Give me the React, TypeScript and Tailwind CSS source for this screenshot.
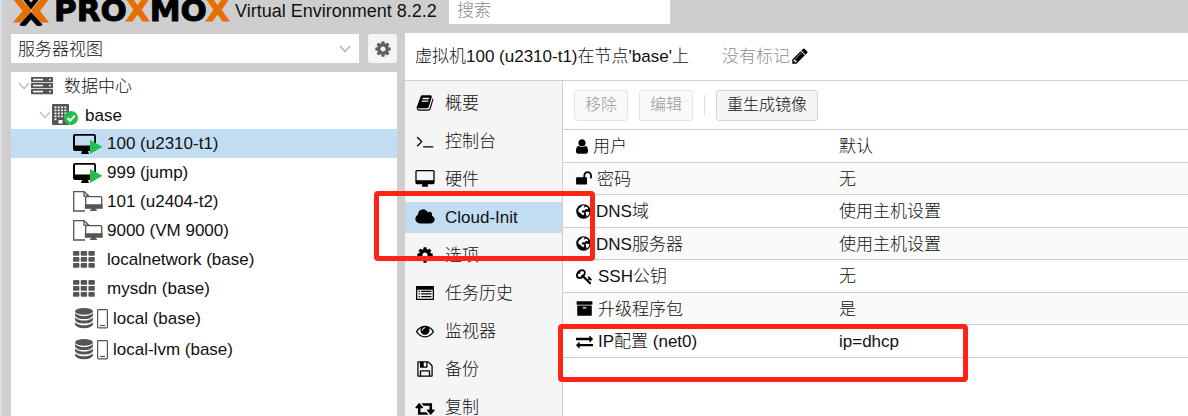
import React from "react";

const PATHS = {
  book: "M1703 478q40 57 18 129l-275 906q-19 64-76.5 107.5t-122.5 43.5h-923q-77 0-148.5-53.5t-99.5-131.5q-24-67-2-127 0-4 3-27t4-37q1-8-3-21.5t-3-19.5q2-11 8-21t16.5-23.5 16.5-23.5q23-38 45-91.5t30-91.5q3-10 .5-30t-.5-28q3-11 17-28t17-23q21-36 42-92t25-90q1-9-2.5-32t.5-28q4-13 22-30.5t22-22.5q19-26 42.5-84.5t27.5-96.5q1-8-3-25.5t-2-26.5q2-8 9-18t18-23 17-21q8-12 16.5-30.5t15-35 16-36 19.5-32 26.5-23.5 36-11.5 47.5 5.5l-1 3q38-9 51-9h761q74 0 114 56t18 130l-274 906q-36 119-71.5 153.5t-128.5 34.5h-869q-27 0-38 15-11 16-1 43 24 70 144 70h923q29 0 56-15.5t35-41.5l300-987q7-22 5-57 38 15 59 43zm-1064 2q-4 13 2 22.5t20 9.5h608q13 0 25.5-9.5t16.5-22.5l21-64q4-13-2-22.5t-20-9.5h-608q-13 0-25.5 9.5t-16.5 22.5zm-83 256q-4 13 2 22.5t20 9.5h608q13 0 25.5-9.5t16.5-22.5l21-64q4-13-2-22.5t-20-9.5h-608q-13 0-25.5 9.5t-16.5 22.5z",
  terminal: "M649 983l-466 466q-10 10-23 10t-23-10l-50-50q-10-10-10-23t10-23l393-393-393-393q-10-10-10-23t10-23l50-50q10-10 23-10t23 10l466 466q10 10 10 23t-10 23zm1079 457v64q0 14-9 23t-23 9h-960q-14 0-23-9t-9-23v-64q0-14 9-23t23-9h960q14 0 23 9t9 23z",
  desktop: "M1728 992v-832q0-13-9.5-22.5t-22.5-9.5h-1600q-13 0-22.5 9.5t-9.5 22.5v832q0 13 9.5 22.5t22.5 9.5h1600q13 0 22.5-9.5t9.5-22.5zm128-832v1088q0 66-47 113t-113 47h-544q0 37 16 77.5t32 71 16 43.5q0 26-19 45t-45 19h-512q-26 0-45-19t-19-45q0-14 16-44t32-70 16-78h-544q-66 0-113-47t-47-113v-1088q0-66 47-113t113-47h1600q66 0 113 47t47 113z",
  cloud: "M1984 1152q0 159-112.5 271.5t-271.5 112.5h-1088q-185 0-316.5-131.5t-131.5-316.5q0-132 71-241.5t187-163.5q-2-28-2-43 0-212 150-362t362-150q158 0 286.5 88t187.5 230q70-62 166-62 106 0 181 75t75 181q0 75-41 138 129 30 213 134.5t84 239.5z",
  cog: "M1152 896q0-106-75-181t-181-75-181 75-75 181 75 181 181 75 181-75 75-181zm512-109v222q0 12-8 23t-20 13l-185 28q-19 54-39 91 35 50 107 138 10 12 10 25t-9 23q-27 37-99 108t-94 71q-12 0-26-9l-138-108q-44 23-91 38-16 136-29 186-7 28-36 28h-222q-14 0-24.5-8.5t-11.5-21.5l-28-184q-49-16-90-37l-141 107q-10 9-25 9-14 0-25-11-126-114-165-168-7-10-7-23 0-12 8-23 15-21 51-66.5t54-70.5q-27-50-41-99l-183-27q-13-2-21-12.5t-8-23.5v-222q0-12 8-23t19-13l186-28q14-46 39-92-40-57-107-138-10-12-10-24 0-10 9-23 26-36 98.5-107.5t94.5-71.5q13 0 26 10l138 107q44-23 91-38 16-136 29-186 7-28 36-28h222q14 0 24.5 8.5t11.5 21.5l28 184q49 16 90 37l142-107q9-9 24-9 13 0 25 10 129 119 165 170 7 8 7 22 0 12-8 23-15 21-51 66.5t-54 70.5q26 50 41 98l183 28q13 2 21 12.5t8 23.5z",
  list: "M64 192h1664q64 0 64 64v1280q0 64-64 64h-1664q-64 0-64-64v-1280q0-64 64-64zm64 384v896h1536v-896zm128 96h128v128h-128zm256 0h1024v128h-1024zm-256 256h128v128h-128zm256 0h1024v128h-1024zm-256 256h128v128h-128zm256 0h1024v128h-1024z",
  eye: "M1664 960q-152-236-381-353 61 104 61 225 0 185-131.5 316.5t-316.5 131.5-316.5-131.5-131.5-316.5q0-121 61-225-229 117-381 353 133 205 333.5 326.5t434.5 121.5 434.5-121.5 333.5-326.5zm-720-384q0-20-14-34t-34-14q-125 0-214.5 89.5t-89.5 214.5q0 20 14 34t34 14 34-14 14-34q0-86 61-147t147-61q20 0 34-14t14-34zm848 384q0 34-20 69-140 230-376.5 368.5t-499.5 138.5-499.5-139-376.5-368q-20-35-20-69t20-69q140-229 376.5-368t499.5-139 499.5 139 376.5 368q20 35 20 69z",
  floppy: "M512 1536h768v-384h-768v384zm896 0h128v-896q0-14-10-38.5t-20-34.5l-281-281q-10-10-34-20t-39-10v416q0 40-28 68t-68 28h-576q-40 0-68-28t-28-68v-416h-128v1280h128v-416q0-40 28-68t68-28h832q40 0 68 28t28 68v416zm-384-928v-320q0-13-9.5-22.5t-22.5-9.5h-192q-13 0-22.5 9.5t-9.5 22.5v320q0 13 9.5 22.5t22.5 9.5h192q13 0 22.5-9.5t9.5-22.5zm640 32v928q0 40-28 68t-68 28h-1344q-40 0-68-28t-28-68v-1344q0-40 28-68t68-28h928q40 0 88 20t76 48l280 280q28 28 48 76t20 88z",
  retweet: "M1280 1632q0 13-9.5 22.5t-22.5 9.5h-960q-8 0-13.5-2t-9-7-5.5-8-3-11.5-1-11.5v-600h-192q-26 0-45-19t-19-45q0-24 15-41l320-384q19-22 49-22t49 22l320 384q15 17 15 41 0 26-19 45t-45 19h-192v384h576q16 0 25 11l160 192q7 10 7 21zm640-416q0 24-15 41l-320 384q-20 23-49 23t-49-23l-320-384q-15-17-15-41 0-26 19-45t45-19h192v-384h-576q-16 0-25-12l-160-192q-7-9-7-20 0-13 9.5-22.5t22.5-9.5h960q8 0 13.5 2t9 7 5.5 8 3 11.5 1 11.5v600h192q26 0 45 19t19 45z",
  user: "M1536 1399q0 109-62.5 187t-150.5 78h-854q-88 0-150.5-78t-62.5-187q0-85 8.5-160.5t31.5-152 58.5-131 94-89 134.5-34.5q131 128 313 128t313-128q76 0 134.5 34.5t94 89 58.5 131 31.5 152 8.5 160.5zm-256-887q0 159-112.5 271.5t-271.5 112.5-271.5-112.5-112.5-271.5 112.5-271.5 271.5-112.5 271.5 112.5 112.5 271.5z",
  unlock: "M1728 576v256q0 26-19 45t-45 19h-64q-26 0-45-19t-19-45v-256q0-106-75-181t-181-75-181 75-75 181v192h96q40 0 68 28t28 68v576q0 40-28 68t-68 28h-960q-40 0-68-28t-28-68v-576q0-40 28-68t68-28h672v-192q0-185 131.5-316.5t316.5-131.5 316.5 131.5 131.5 316.5z",
  key: "M832 512q0-80-56-136t-136-56-136 56-56 136q0 42 19 83-41-19-83-19-80 0-136 56t-56 136 56 136 136 56 136-56 56-136q0-42-19-83 41 19 83 19 80 0 136-56t56-136zm851 704q0 17-49 66t-66 49q-9 0-28.5-16t-36.5-33-38.5-40-24.5-26l-96 96 220 220q28 28 28 68 0 42-39 81t-81 39q-40 0-68-28l-671-671q-176 131-365 131-163 0-265.5-102.5t-102.5-265.5q0-160 95-313t248-248 313-95q163 0 265.5 102.5t102.5 265.5q0 189-131 365l355 355 96-96q-3-3-26-24.5t-40-38.5-33-36.5-16-28.5q0-17 49-66t66-49q13 0 23 10 6 6 46 44.5t82 79.5 86.5 86 73 78 28.5 41z",
  archive: "M1088 832q0-26-19-45t-45-19h-256q-26 0-45 19t-19 45 19 45 45 19h256q26 0 45-19t19-45zm576-192v960q0 26-19 45t-45 19h-1408q-26 0-45-19t-19-45v-960q0-26 19-45t45-19h1408q26 0 45 19t19 45zm64-448v256q0 26-19 45t-45 19h-1536q-26 0-45-19t-19-45v-256q0-26 19-45t45-19h1536q26 0 45 19t19 45z",
  exchange: "M1792 1184v192q0 13-9.5 22.5t-22.5 9.5h-1376v192q0 13-9.5 22.5t-22.5 9.5q-12 0-24-10l-319-320q-9-9-9-22 0-14 9-23l320-320q9-9 23-9 13 0 22.5 9.5t9.5 22.5v192h1376q13 0 22.5 9.5t9.5 22.5zm0-544q0 14-9 23l-320 320q-9 9-23 9-13 0-22.5-9.5t-9.5-22.5v-192h-1376q-13 0-22.5-9.5t-9.5-22.5v-192q0-13 9.5-22.5t22.5-9.5h1376v-192q0-14 9-23t23-9q12 0 24 10l319 319q9 9 9 23z",
  pencil: "M491 1536l91-91-235-235-91 91v107h128v128h107zm523-928q0-22-22-22-10 0-17 7l-542 542q-7 7-7 17 0 22 22 22 10 0 17-7l542-542q7-7 7-17zm-54-192l416 416-832 832h-416v-416zm683 96q0 53-37 90l-166 166-416-416 166-165q36-38 90-38 53 0 91 38l235 234q37 39 37 91z",
  globe: "M896 128a768 768 0 1 0 0 1536a768 768 0 1 0 0-1536zM760 270l210-20 40 90-90 90 130 40 110-90 130 40 100 150-60 90-130-30-120 60-60 110-110-30-130 20-70 110 50 90 110-20 80 90 20 160-90 60-150-60-110-130-160-90-120-150 30-180 100-130 140-90zM1130 950l150-60 180 60 60 100-80 190-150 160-110 40 40-180-100-120z",
};

type IconName = keyof typeof PATHS;

function Icon({ name, box, className }: { name: IconName; box: string; className: string }) {
  return (
    <svg viewBox={box} className={`shrink-0 ${className}`} fill="currentColor" fillRule="evenodd" aria-hidden="true">
      <path d={PATHS[name]} />
    </svg>
  );
}

function Chevron({ className }: { className: string }) {
  return (
    <svg viewBox="0 0 12 8" className={`shrink-0 ${className}`} fill="none" stroke="currentColor" strokeWidth="1.6" aria-hidden="true">
      <path d="M1 1l5 5.5L11 1" />
    </svg>
  );
}

function LogoMark() {
  return (
    <svg viewBox="0 0 38 27" className="h-[27px] w-[38px] shrink-0" aria-hidden="true">
      <path d="M1 -1h6q2 0 3.500 1.500L18 8.500q2 2.300 0 4.500L10.500 21q-1.500 1.600-3.500 1.600H1L10.500 11z" fill="#e57000" />
      <path d="M37 -1h-6q-2 0-3.500 1.500L20.500 8.500q-2 2.300 0 4.500L27.500 21q1.500 1.600 3.500 1.600H37L28 11z" fill="#e57000" />
      <path d="M10.500 -1h17L19 9.500z" fill="#000" />
      <path d="M16 -1h6L19 2.500z" fill="#cecece" />
      <path d="M19 12l11.500 12.500q-1 1.500-3 1.500h-2.500L19 19.500 13.500 26H10.500q-2 0-3-1.500z" fill="#000" />
    </svg>
  );
}

function ServerIcon() {
  return (
    <svg viewBox="0 0 22 18" className="h-[18px] w-[22px] shrink-0" aria-hidden="true">
      {[0, 6, 12].map((y) => (
        <g key={y}>
          <rect x="0" y={y} width="22" height="5.200" rx="0.600" fill="#555" />
          <rect x="2" y={y + 1.8} width="10" height="1.500" fill="#fff" />
          <rect x="18" y={y + 1.8} width="1.800" height="1.500" fill="#fff" />
        </g>
      ))}
    </svg>
  );
}

function NodeIcon() {
  return (
    <svg viewBox="0 0 26 22" className="h-[22px] w-[26px] shrink-0" aria-hidden="true">
      <rect x="0" y="0" width="17" height="21" rx="0.800" fill="#555" />
      {[2.5, 5.5, 8.5, 11.500].map((y) =>
        [2.5, 5.8, 9.1, 12.4].map((x) => <rect key={`${x}-${y}`} x={x} y={y} width="1.900" height="1.700" fill="#fff" />),
      )}
      <rect x="2.500" y="14.500" width="1.900" height="1.700" fill="#fff" />
      <rect x="6.500" y="16" width="4" height="3.500" fill="#fff" />
      <circle cx="19" cy="14" r="7" fill="#21bf4b" />
      <path d="M15.500 14l2.500 2.700 4.700-5" fill="none" stroke="#fff" strokeWidth="2" />
    </svg>
  );
}

function RunningIcon() {
  return (
    <svg viewBox="0 0 30 20" className="h-5 w-[30px] shrink-0" aria-hidden="true">
      <path d="M2 0h19q2 0 2 2v13q0 2-2 2h-6l1 3h-8l1-3h-7q-2 0-2-2v-13q0-2 2-2zm0 1.800v9.700h19.200v-9.700z" fill="#000" fillRule="evenodd" />
      <path d="M17 6l12.500 6.800-12.500 7.200z" fill="#21bf4b" />
    </svg>
  );
}

function TemplateIcon() {
  return (
    <svg viewBox="0 0 30 21" className="h-[21px] w-[30px] shrink-0" fill="none" stroke="#555" strokeWidth="1.300" aria-hidden="true">
      <path d="M12 20H.7V.7H11l5 4.500M11 .7v4.500h5" />
      <rect x="12.700" y="5.700" width="16" height="10.800" rx="1" fill="#fff" />
      <path d="M12.500 14h16.500v3h-16.500zM17 19.300h7M19 17h3v2h-3z" fill="#555" />
    </svg>
  );
}

function GridIcon() {
  return (
    <svg viewBox="0 0 30 17" className="h-[17px] w-[30px] shrink-0" fill="#555" aria-hidden="true">
      {[0, 6, 12].map((y) => [0, 7.7, 15.400].map((x) => <rect key={`${x}-${y}`} x={x} y={y} width="6.400" height="4.800" rx="1" />))}
    </svg>
  );
}

function StorageIcon() {
  return (
    <svg viewBox="0 0 36 21" className="h-[21px] w-9 shrink-0" aria-hidden="true">
      <ellipse cx="11" cy="3.400" rx="9" ry="3.400" fill="#555" />
      {[5.2, 9.8, 14.400].map((y) => (
        <path key={y} d={`M2 ${y}q3.500 2.800 9 2.800t9-2.800v2.200q-1.500 3.600-9 3.600t-9-3.600z`} fill="#555" />
      ))}
      <rect x="24.600" y="1.600" width="9.800" height="18.200" rx="0.800" fill="#fff" stroke="#555" strokeWidth="1.200" />
      <path d="M27 17.500h5" stroke="#555" strokeWidth="1.200" />
    </svg>
  );
}

const GUESTS = [
  { label: "100 (u2310-t1)", icon: <RunningIcon />, selected: true },
  { label: "999 (jump)", icon: <RunningIcon /> },
  { label: "101 (u2404-t2)", icon: <TemplateIcon /> },
  { label: "9000 (VM 9000)", icon: <TemplateIcon /> },
  { label: "localnetwork (base)", icon: <GridIcon /> },
  { label: "mysdn (base)", icon: <GridIcon /> },
];

const STORAGES = ["local (base)", "local-lvm (base)"];

const NAV: { label: string; icon: IconName; box: string; size: string; active?: boolean }[] = [
  { label: "概要", icon: "book", box: "0 0 1792 1792", size: "size-[18px]" },
  { label: "控制台", icon: "terminal", box: "0 0 1792 1792", size: "size-[18px]" },
  { label: "硬件", icon: "desktop", box: "-64 0 1920 1792", size: "h-[18px] w-5" },
  { label: "Cloud-Init", icon: "cloud", box: "64 0 1920 1792", size: "h-[18px] w-5", active: true },
  { label: "选项", icon: "cog", box: "0 0 1792 1792", size: "size-[18px]" },
  { label: "任务历史", icon: "list", box: "0 0 1792 1792", size: "size-[18px]" },
  { label: "监视器", icon: "eye", box: "0 0 1792 1792", size: "size-[18px]" },
  { label: "备份", icon: "floppy", box: "0 0 1792 1792", size: "size-[18px]" },
  { label: "复制", icon: "retweet", box: "0 0 1920 1792", size: "h-[18px] w-5" },
];

const SETTINGS: { label: string; value: string; icon: IconName; box: string; size: string }[] = [
  { label: "用户", value: "默认", icon: "user", box: "256 0 1280 1792", size: "h-[17px] w-3" },
  { label: "密码", value: "无", icon: "unlock", box: "64 0 1664 1792", size: "h-[17px] w-4" },
  { label: "DNS域", value: "使用主机设置", icon: "globe", box: "128 0 1536 1792", size: "h-[17px] w-[15px]" },
  { label: "DNS服务器", value: "使用主机设置", icon: "globe", box: "128 0 1536 1792", size: "h-[17px] w-[15px]" },
  { label: "SSH公钥", value: "无", icon: "key", box: "0 0 1792 1792", size: "size-[17px]" },
  { label: "升级程序包", value: "是", icon: "archive", box: "0 0 1792 1792", size: "size-[17px]" },
  { label: "IP配置 (net0)", value: "ip=dhcp", icon: "exchange", box: "0 0 1792 1792", size: "size-[17px]" },
];

function TopBar() {
  return (
    <header className="flex h-[33px] items-start pl-3">
      <LogoMark />
      <span className="ml-1 w-[181px] whitespace-nowrap font-['DejaVu_Sans',sans-serif] text-[31px] leading-5 font-bold text-black [-webkit-text-stroke:1px_currentColor]">
        PRO<span className="text-[#e57000]">X</span>MO<span className="text-[#e57000]">X</span>
      </span>
      <span className="w-[214px] whitespace-nowrap text-[18px] leading-[22px]">Virtual Environment 8.2.2</span>
      <input
        type="text"
        aria-label="搜索"
        placeholder="搜索"
        className="h-6 w-[221px] bg-white px-2 pb-0.5 outline-none placeholder:text-[#8a8a8a]"
      />
    </header>
  );
}

function ResourceTree() {
  return (
    <aside className="flex w-[386px] shrink-0 flex-col">
      <div className="flex gap-[9px] pt-px">
        <div className="grid w-[348px] items-center bg-white">
          <select
            aria-label="视图"
            className="col-start-1 row-start-1 h-[29px] w-full appearance-none bg-transparent pt-0.5 pl-[7px] outline-none"
          >
            <option>服务器视图</option>
          </select>
          <Chevron className="pointer-events-none col-start-1 row-start-1 mr-2 h-2 w-3 justify-self-end text-[#b8b8b8]" />
        </div>
        <button type="button" aria-label="设置" className="flex h-[29px] w-[29px] items-center justify-center rounded-[3px] bg-[#f5f5f5] text-[#606060]">
          <Icon name="cog" box="0 0 1792 1792" className="size-[18px]" />
        </button>
      </div>
      <ul className="mt-[9px] flex-1 bg-white">
        <li>
          <div className="flex h-7 items-center pl-[7px]">
            <Chevron className="h-2 w-3 text-[#c4c4c4]" />
            <span className="mr-[11px] ml-px flex"><ServerIcon /></span>
            <span className="pt-0.5">数据中心</span>
          </div>
          <ul>
            <li>
              <div className="flex h-[29px] items-center pl-7">
                <Chevron className="h-2 w-3 text-[#c4c4c4]" />
                <span className="mr-[7px] ml-px flex"><NodeIcon /></span>
                <span className="pt-0.5">base</span>
              </div>
              <ul>
                {GUESTS.map((g) => (
                  <li key={g.label} className={`flex h-[29px] items-center gap-1 pl-[62px] ${g.selected ? "bg-[#c2ddf2]" : ""}`}>
                    {g.icon}
                    {g.label}
                  </li>
                ))}
                {STORAGES.map((s) => (
                  <li key={s} className="flex h-[31px] items-center gap-1 pl-[62px]">
                    <StorageIcon />
                    {s}
                  </li>
                ))}
              </ul>
            </li>
          </ul>
        </li>
      </ul>
    </aside>
  );
}

function SideNav() {
  return (
    <nav className="flex w-[158px] shrink-0 flex-col gap-[7px] overflow-hidden border-r border-[#cfcfcf] bg-[#f5f5f5] pt-[7px]">
      {NAV.map((n) => (
        <a
          key={n.label}
          href="#"
          className={`flex h-[31px] shrink-0 items-center gap-[10px] pl-[10px] ${n.active ? "bg-[#c2ddf2]" : ""}`}
        >
          <span className="flex w-5 justify-center pb-0.5 text-black">
            <Icon name={n.icon} box={n.box} className={n.size} />
          </span>
          {n.label}
        </a>
      ))}
    </nav>
  );
}

function CloudInitPanel() {
  return (
    <section className="min-w-0 flex-1">
      <div className="flex h-12 items-center gap-[11px] pl-[11px] text-[16px]">
        <button type="button" disabled className="h-[31px] rounded-[3px] border border-[#e4e4e4] bg-[#fafafa] px-[10px] text-[#999]">
          移除
        </button>
        <button type="button" disabled className="h-[31px] rounded-[3px] border border-[#e4e4e4] bg-[#fafafa] px-[10px] text-[#999]">
          编辑
        </button>
        <span className="h-5 w-px bg-[#dcdcdc]" />
        <button type="button" className="h-[31px] rounded-[3px] border border-[#d4d4d4] bg-[#f5f5f5] px-[10px]">
          重生成镜像
        </button>
      </div>
      <table className="w-full table-fixed border-separate border-spacing-0 border-t border-[#cfcfcf]">
        <tbody>
          {SETTINGS.map((s) => (
            <tr key={s.label} className="h-[33px] even:h-8 even:bg-[#fafafa]">
              <th scope="row" className="w-[276px] border-b border-[#cfcfcf] p-0 pt-0.5 pl-[13px] text-left font-light">
                <span className="flex items-center gap-[5px] leading-6">
                  <Icon name={s.icon} box={s.box} className={`mb-0.5 text-black ${s.size}`} />
                  {s.label}
                </span>
              </th>
              <td className="border-b border-[#cfcfcf] p-0 pt-0.5 leading-6">{s.value}</td>
            </tr>
          ))}
        </tbody>
      </table>
    </section>
  );
}

export default function App() {
  return (
    <div className="relative flex h-screen flex-col overflow-hidden border-l-2 border-[#dcdce4] bg-[#cecece] font-['Liberation_Sans','Noto_Sans_CJK_SC',sans-serif] text-[17px] font-light text-[#111]">
      <div className="-ml-0.5 flex min-h-0 flex-1 flex-col">
        <TopBar />
        <div className="flex min-h-0 flex-1 gap-2 pl-[11px]">
          <ResourceTree />
          <main className="flex min-w-0 flex-1 flex-col bg-white">
            <div className="flex h-12 shrink-0 items-center border-b border-[#cfcfcf] pl-[10px]">
              <h1 className="mr-[33px] whitespace-nowrap">虚拟机100 (u2310-t1)在节点'base'上</h1>
              <span className="text-[#8f8f8f]">没有标记</span>
              <button type="button" aria-label="编辑标记" className="ml-px pb-0.5 text-black">
                <Icon name="pencil" box="0 0 1792 1792" className="size-[18px]" />
              </button>
            </div>
            <div className="flex min-h-0 flex-1">
              <SideNav />
              <CloudInitPanel />
            </div>
          </main>
        </div>
      </div>
      <div className="pointer-events-none absolute top-[191px] left-[372px] h-[70px] w-[221px] rounded-[4px] border-[5px] border-[#ff2416]" />
      <div className="pointer-events-none absolute top-[324px] left-[556px] h-[58px] w-[410px] rounded-[4px] border-[5px] border-[#ff2416]" />
    </div>
  );
}
